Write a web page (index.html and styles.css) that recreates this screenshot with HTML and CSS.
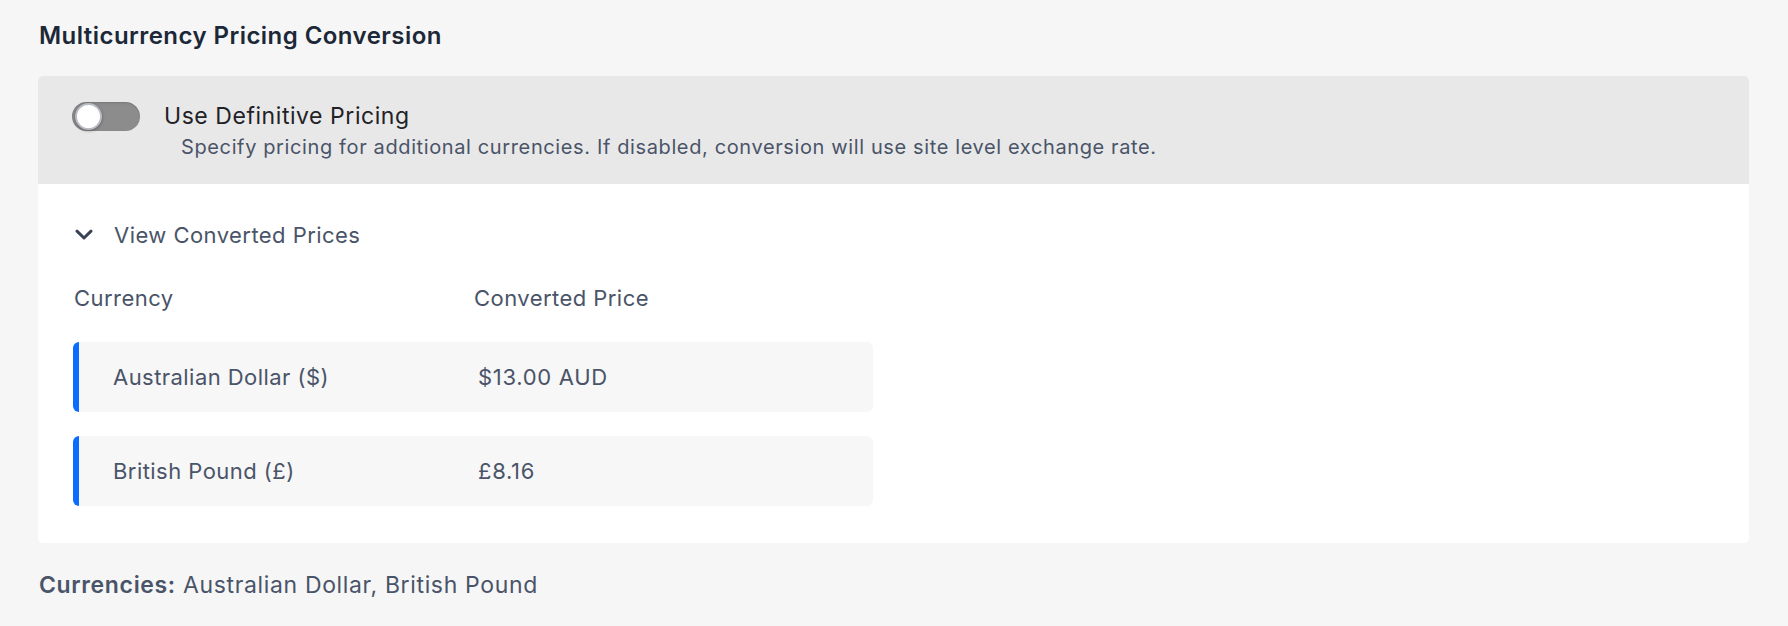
FILE: index.html
```html
<!DOCTYPE html>
<html lang="en">
<head>
<meta charset="utf-8">
<title>Multicurrency Pricing Conversion</title>
<link rel="stylesheet" href="styles.css">
</head>
<body>
<main class="page">
  <h2 class="title">Multicurrency Pricing Conversion</h2>
  <section class="card">
    <div class="card-head">
      <div class="toggle-row">
        <span class="toggle"><span class="knob"></span></span>
        <span class="toggle-label">Use Definitive Pricing</span>
      </div>
      <p class="desc">Specify pricing for additional currencies. If disabled, conversion will use site level exchange rate.</p>
    </div>
    <div class="card-body">
      <div class="disclosure">
        <svg class="chev" viewBox="0 0 18 12" width="18" height="12" aria-hidden="true"><path d="M2 2.2 L9 9 L16 2.2" fill="none" stroke="#3a4356" stroke-width="3" stroke-linecap="round" stroke-linejoin="round"/></svg>
        <span>View Converted Prices</span>
      </div>
      <div class="table">
        <div class="thead">
          <span class="col1">Currency</span>
          <span class="col2">Converted Price</span>
        </div>
        <div class="trow">
          <span class="col1">Australian Dollar ($)</span>
          <span class="col2">$13.00 AUD</span>
        </div>
        <div class="trow">
          <span class="col1">British Pound (£)</span>
          <span class="col2">£8.16</span>
        </div>
      </div>
    </div>
  </section>
  <p class="summary"><strong>Currencies:</strong> Australian Dollar, British Pound</p>
</main>
</body>
</html>
```

FILE: styles.css
```css
html, body {
  margin: 0;
  padding: 0;
  background: #f6f6f6;
}
body {
  font-family: Inter, "Noto Sans", sans-serif;
  color: #4a5468;
  letter-spacing: 0.45px;
}
.page {
  padding: 22px 39px 0 38px;
}
.title {
  margin: 0;
  font-size: 24px;
  line-height: 28px;
  font-weight: 600;
  color: #1c2838;
  padding-left: 1px;
  letter-spacing: 0.45px;
}
.card {
  margin-top: 26px;
  background: #ffffff;
  border-radius: 5px;
  overflow: hidden;
}
.card-head {
  background: #e8e8e8;
  padding: 25px 34px 0 34px;
  height: 83px;
}
.toggle-row {
  display: flex;
  align-items: center;
  gap: 24px;
}
.toggle {
  width: 68px;
  height: 29px;
  border-radius: 15px;
  background: #8c8c8c;
  display: flex;
  align-items: center;
  padding-left: 3px;
  box-sizing: border-box;
  box-shadow: inset 0 1px 2px rgba(0,0,0,0.15);
}
.knob {
  width: 23px;
  height: 23px;
  border-radius: 50%;
  background: #ffffff;
  border: 2px solid #b9bcc4;
  box-shadow: 0 1px 3px rgba(0,0,0,0.35);
}
.toggle-label {
  font-size: 23px;
  color: #1f2226;
  line-height: 30px;
  letter-spacing: 0.55px;
}
.desc {
  margin: 3px 0 0 109px;
  font-size: 20px;
  line-height: 26px;
  color: #4a5468;
  letter-spacing: 0.62px;
}
.card-body {
  padding: 36px 0 37px 35px;
}
.disclosure {
  display: flex;
  align-items: center;
  gap: 21px;
  font-size: 22px;
  line-height: 30px;
  padding-left: 2px;
}
.chev {
  display: block;
}
.table {
  margin-top: 33px;
  width: 800px;
}
.thead {
  display: flex;
  font-size: 22px;
  line-height: 30px;
  padding-left: 1px;
}
.thead .col1 { width: 400px; }
.trow {
  display: flex;
  align-items: center;
  height: 70px;
  background: #f7f7f7;
  border-left: 6px solid #0b6cff;
  border-radius: 6px;
  box-sizing: border-box;
  padding-left: 34px;
  padding-bottom: 1px;
  font-size: 22px;
  margin-top: 24px;
}
.thead + .trow { margin-top: 29px; }
.trow .col1 { width: 365px; }
.trow .col2 { letter-spacing: 0.7px; }
.summary {
  margin: 27px 0 0 1px;
  font-size: 23px;
  line-height: 30px;
  color: #4a5468;
  letter-spacing: 0.65px;
}
.summary strong {
  font-weight: 600;
}
```
